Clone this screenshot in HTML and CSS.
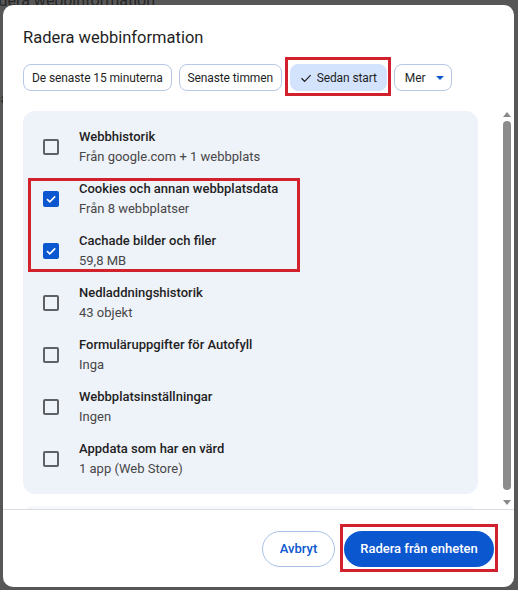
FILE: index.html
```html
<!DOCTYPE html>
<html lang="sv">
<head>
<meta charset="utf-8">
<title>Radera webbinformation</title>
<link rel="stylesheet" href="styles.css">
</head>
<body>
<div class="page">
  <div class="page-title">Radera webbinformation</div>
  <div class="page-line l1">Sekretess och säkerhet</div>
  <div class="page-line l2">Cookies och annan webbplatsdata</div>
  <div class="page-line l3">Webbplatsinställningar</div>
  <div class="page-line l4">Ladda ner objekt</div>
  <div class="page-line l5">Webbhistorik</div>
</div>

<div class="dialog" role="dialog">
  <div class="head">
    <h1 class="title">Radera webbinformation</h1>
    <div class="chips">
      <button class="chip">De senaste 15 minuterna</button>
      <button class="chip chip-hour">Senaste timmen</button>
      <span class="mark mark-chip">
        <button class="chip chip-on"><svg class="tick" viewBox="0 0 12 12" width="12" height="12"><path d="M1.5 6.3 L4.6 9.3 L10.6 3.2" fill="none" stroke="#1f1f1f" stroke-width="1.2"/></svg>Sedan start</button>
      </span>
      <button class="chip chip-mer">Mer<svg class="caret" viewBox="0 0 8 4" width="8" height="4"><path d="M0 0 H8 L4 4 Z" fill="#0b57d0"/></svg></button>
    </div>
  </div>

  <div class="scroll">
    <div class="scroll-body">
      <div class="panel">
        <div class="row">
          <span class="box"></span>
          <div class="txt"><div class="t">Webbhistorik</div><div class="s">Från google.com + 1 webbplats</div></div>
        </div>
        <div class="mark-group">
          <div class="row">
            <span class="box on"><svg viewBox="0 0 16 16" width="16" height="16"><path d="M4 8.2 L6.8 10.9 L12.2 5.4" fill="none" stroke="#fff" stroke-width="1.6"/></svg></span>
            <div class="txt"><div class="t">Cookies och annan webbplatsdata</div><div class="s">Från 8 webbplatser</div></div>
          </div>
          <div class="row">
            <span class="box on"><svg viewBox="0 0 16 16" width="16" height="16"><path d="M4 8.2 L6.8 10.9 L12.2 5.4" fill="none" stroke="#fff" stroke-width="1.6"/></svg></span>
            <div class="txt"><div class="t">Cachade bilder och filer</div><div class="s">59,8 MB</div></div>
          </div>
          <span class="mark-box"></span>
        </div>
        <div class="row">
          <span class="box"></span>
          <div class="txt"><div class="t">Nedladdningshistorik</div><div class="s">43 objekt</div></div>
        </div>
        <div class="row">
          <span class="box"></span>
          <div class="txt"><div class="t">Formuläruppgifter för Autofyll</div><div class="s">Inga</div></div>
        </div>
        <div class="row">
          <span class="box"></span>
          <div class="txt"><div class="t">Webbplatsinställningar</div><div class="s">Ingen</div></div>
        </div>
        <div class="row">
          <span class="box"></span>
          <div class="txt"><div class="t">Appdata som har en värd</div><div class="s">1 app (Web Store)</div></div>
        </div>
      </div>
      <div class="panel2"></div>
    </div>
    <div class="scrollbar">
      <svg class="arr" viewBox="0 0 8 5" width="8" height="5"><path d="M0 5 H8 L4 0 Z" fill="#8a8a8a"/></svg>
      <div class="thumb"></div>
      <svg class="arr" viewBox="0 0 8 5" width="8" height="5"><path d="M0 0 H8 L4 5 Z" fill="#8a8a8a"/></svg>
    </div>
  </div>

  <div class="foot">
    <button class="btn btn-out">Avbryt</button>
    <span class="mark mark-btn">
      <button class="btn btn-fill">Radera från enheten</button>
    </span>
  </div>
</div>
</body>
</html>
```

FILE: styles.css
```css
* { box-sizing: border-box; }
html, body { margin: 0; padding: 0; }
body {
  width: 518px;
  height: 590px;
  overflow: hidden;
  background: #575757;
  font-family: Roboto, "Noto Sans", sans-serif;
  position: relative;
}
.page { color: #262626; font-size: 13px; }
.page-title { font-size: 16px; margin: -9px 0 0 -20px; }
.page-line { margin-left: -180px; white-space: nowrap; }
.l1 { margin-top: 36px; }
.l2 { margin-top: 30px; }
.l3 { margin-top: 30px; }
.l4 { margin-top: 40px; }
.l5 { margin-top: 40px; }

.dialog {
  position: absolute;
  left: 3px;
  top: 5px;
  width: 511px;
  height: 582px;
  background: #fff;
  border-radius: 10px;
  display: flex;
  flex-direction: column;
  overflow: hidden;
}
.head { padding: 23px 20px 0 20px; }
.title {
  margin: 0;
  font-size: 16.5px;
  font-weight: 400;
  line-height: 20px;
  color: #1f1f1f;
}
.chips {
  display: flex;
  gap: 7px;
  margin-top: 16px;
  align-items: center;
}
.chip {
  height: 27px;
  border: 1px solid #b6c8e6;
  background: #fff;
  border-radius: 8px;
  padding: 0 8px;
  font-family: inherit;
  font-size: 12px;
  letter-spacing: -0.1px;
  color: #1f1f1f;
  display: inline-flex;
  align-items: center;
  white-space: nowrap;
}
.chip-hour { width: 103px; justify-content: center; }
.chip-on {
  background: #d3e3fd;
  border-color: #d3e3fd;
  width: 97px;
  justify-content: center;
  padding: 0;
}
.chip-mer { width: 58px; padding: 0 0 0 10px; }
.tick { margin-right: 5px; }
.caret { margin-left: 11px; }

.mark { position: relative; display: inline-flex; }
.mark::after {
  content: "";
  position: absolute;
  border: 3px solid #d1212d;
  pointer-events: none;
}
.mark-chip { margin: 0 0 0 1px; }
.mark-chip::after { left: -5px; right: -4px; top: -7px; bottom: -5px; }

.scroll {
  flex: 1;
  display: flex;
  margin-top: 13px;
  border-bottom: 1px solid #dadce3;
  overflow: hidden;
}
.scroll-body {
  flex: 1;
  padding: 7px 23px 0 20px;
  overflow: hidden;
}
.panel {
  background: #eef2f9;
  border-radius: 12px;
  padding: 10px 0 9px 0;
}
.panel2 {
  margin-top: 12px;
  height: 20px;
  background: #f5f7fb;
  border-radius: 12px;
}
.row {
  display: flex;
  align-items: center;
  height: 52px;
  padding-left: 20px;
}
.box {
  width: 16px;
  height: 16px;
  border: 2px solid #5e6063;
  border-radius: 2px;
  flex: none;
  margin-right: 20px;
  display: inline-flex;
}
.box.on {
  background: #0b57d0;
  border: none;
}
.txt { line-height: 20px; }
.t { font-size: 13px; font-weight: 500; color: #1f1f1f; }
.s { font-size: 13px; color: #474747; }
.mark-group { position: relative; }
.mark-box {
  position: absolute;
  left: 5px;
  top: 5px;
  width: 272px;
  height: 94px;
  border: 3px solid #d1212d;
}

.scrollbar {
  width: 12px;
  margin-right: 1px;
  display: flex;
  flex-direction: column;
  align-items: center;
  padding-top: 8px;
  padding-bottom: 4px;
  gap: 4px;
}
.thumb {
  flex: 1;
  width: 8px;
  background: #8c8c8c;
  border-radius: 4px;
  margin-bottom: 6px;
}

.foot {
  display: flex;
  justify-content: flex-end;
  align-items: center;
  gap: 9px;
  padding: 0 20px;
  height: 77px;
  flex: none;
}
.btn {
  height: 36px;
  border-radius: 18px;
  font-family: inherit;
  font-size: 13px;
  padding: 0 16px;
  white-space: nowrap;
}
.btn-out {
  background: #fff;
  border: 1px solid #a8c0e6;
  color: #0b57d0;
  font-weight: 500;
  width: 73px;
}
.btn-fill {
  background: #0b57d0;
  border: none;
  color: #fff;
  font-weight: 500;
  width: 150px;
}
.mark-btn::after { left: -4px; right: -4px; top: -7px; bottom: -5px; }
```
